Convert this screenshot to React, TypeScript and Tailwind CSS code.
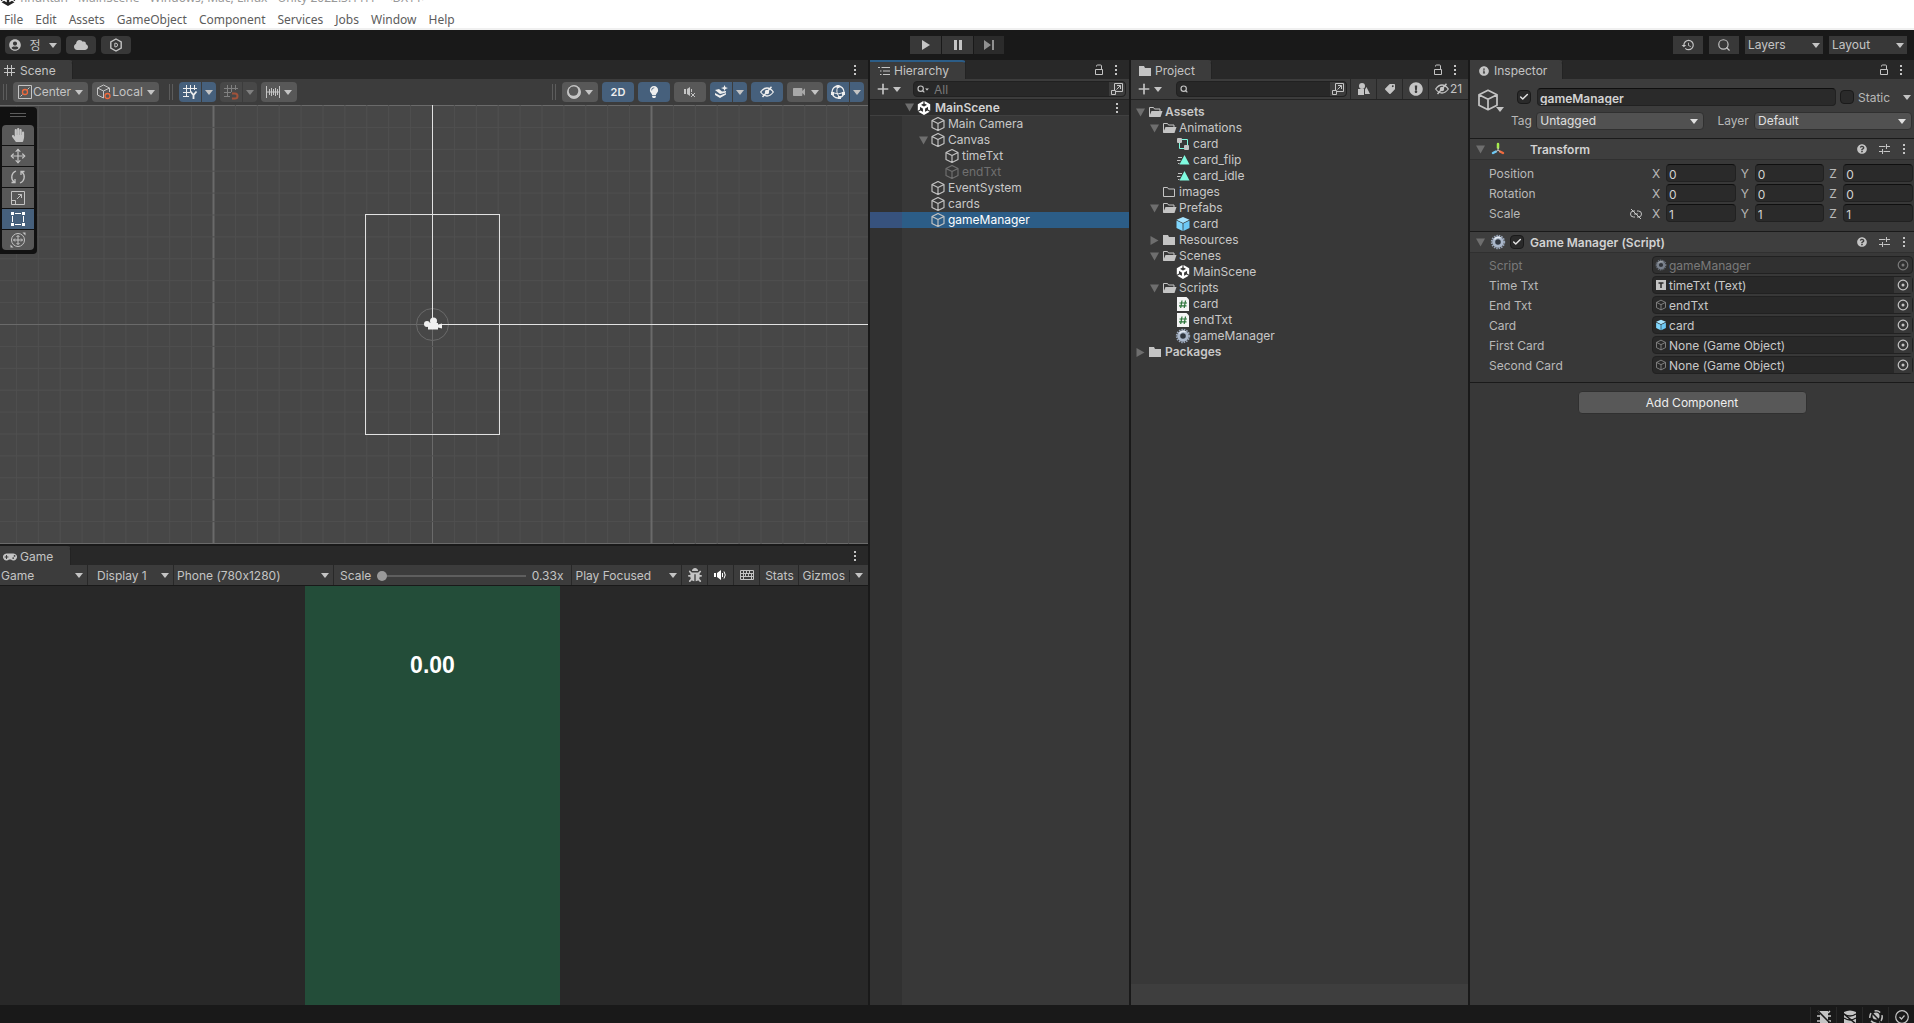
import { useState } from "react";
import type { ReactNode } from "react";
import clsx from "clsx";
import { FaCloud, FaUserCircle, FaHandPaper, FaLightbulb, FaGamepad, FaInfoCircle, FaTag, FaExclamationCircle, FaQuestionCircle, FaBug } from "react-icons/fa";
import { SiUnity } from "react-icons/si";
import { MdHistory, MdVideocam } from "react-icons/md";
import { Search, Plus, Check, Move } from "lucide-react";

type NodeKind =
    | "cube" | "prefab" | "unity" | "open" | "closed" | "empty"
    | "controller" | "clip" | "script" | "gear";

type TreeNode = {
    id: string;
    name: string;
    depth: number;
    icon: NodeKind;
    arrow?: "down" | "right";
    muted?: boolean;
    bold?: boolean;
};

const menus = ["File", "Edit", "Assets", "GameObject", "Component", "Services", "Jobs", "Window", "Help"];

const hierarchy: TreeNode[] = [
    { id: "camera", name: "Main Camera", depth: 1, icon: "cube" },
    { id: "canvas", name: "Canvas", depth: 1, icon: "cube", arrow: "down" },
    { id: "timeTxt", name: "timeTxt", depth: 2, icon: "cube" },
    { id: "endTxt", name: "endTxt", depth: 2, icon: "cube", muted: true },
    { id: "event", name: "EventSystem", depth: 1, icon: "cube" },
    { id: "cards", name: "cards", depth: 1, icon: "cube" },
    { id: "manager", name: "gameManager", depth: 1, icon: "cube" },
];

const assets: TreeNode[] = [
    { id: "assets", name: "Assets", depth: 0, icon: "open", arrow: "down", bold: true },
    { id: "animations", name: "Animations", depth: 1, icon: "open", arrow: "down" },
    { id: "anim-card", name: "card", depth: 2, icon: "controller" },
    { id: "anim-flip", name: "card_flip", depth: 2, icon: "clip" },
    { id: "anim-idle", name: "card_idle", depth: 2, icon: "clip" },
    { id: "images", name: "images", depth: 1, icon: "empty" },
    { id: "prefabs", name: "Prefabs", depth: 1, icon: "open", arrow: "down" },
    { id: "prefab-card", name: "card", depth: 2, icon: "prefab" },
    { id: "resources", name: "Resources", depth: 1, icon: "closed", arrow: "right" },
    { id: "scenes", name: "Scenes", depth: 1, icon: "open", arrow: "down" },
    { id: "main", name: "MainScene", depth: 2, icon: "unity" },
    { id: "scripts", name: "Scripts", depth: 1, icon: "open", arrow: "down" },
    { id: "script-card", name: "card", depth: 2, icon: "script" },
    { id: "script-end", name: "endTxt", depth: 2, icon: "script" },
    { id: "script-manager", name: "gameManager", depth: 2, icon: "gear" },
    { id: "packages", name: "Packages", depth: 0, icon: "closed", arrow: "right", bold: true },
];

const transform = [
    { label: "Position", values: ["0", "0", "0"] },
    { label: "Rotation", values: ["0", "0", "0"] },
    { label: "Scale", values: ["1", "1", "1"], linked: true },
];

const scriptFields = [
    { label: "Script", value: "gameManager", icon: "gear", muted: true },
    { label: "Time Txt", value: "timeTxt (Text)", icon: "text" },
    { label: "End Txt", value: "endTxt", icon: "cube" },
    { label: "Card", value: "card", icon: "prefab" },
    { label: "First Card", value: "None (Game Object)", icon: "cube" },
    { label: "Second Card", value: "None (Game Object)", icon: "cube" },
];

/* ---------- icons ---------- */

function Caret({ className = "" }: { className?: string }) {
    return (
        <svg viewBox="0 0 8 5" className={clsx("w-2 h-[5px] shrink-0 fill-current", className)}>
            <path d="M0 0h8L4 5z" />
        </svg>
    );
}

function Dots() {
    return (
        <svg viewBox="0 0 4 12" className="w-1 h-3 fill-[#c4c4c4]">
            <path d="M1 1h2v2H1zM1 5h2v2H1zM1 9h2v2H1z" />
        </svg>
    );
}

function LockOpen() {
    return (
        <svg viewBox="0 0 10 12" className="w-2.5 h-3 fill-none stroke-[#c4c4c4]">
            <path d="M1.5 5.5h7v5h-7zM2.5 2.5V2q0-1 1-1h3q1 0 1 1v3.500" />
        </svg>
    );
}

function HiddenEye() {
    return (
        <svg viewBox="0 0 14 12" className="w-3.5 h-3 shrink-0 fill-none stroke-current">
            <path d="M.7 6Q3.500 2 7 2t6.300 4Q10.500 10 7 10T.7 6z" strokeWidth="1.300" />
            <circle cx="7" cy="6" r="2.200" className="fill-current stroke-none" />
            <path d="M2.500 11 11.500.800" strokeWidth="1.500" />
        </svg>
    );
}

function Cube({ className = "size-4" }: { className?: string }) {
    return (
        <svg viewBox="0 0 16 16" className={clsx("fill-none stroke-current", className)} strokeWidth="1.150" strokeLinejoin="round">
            <path d="M8 1.500 14 4.500v7L8 14.500l-6-3v-7zM2 4.500l6 3 6-3M8 7.500v7" />
        </svg>
    );
}

function Prefab({ className = "size-4" }: { className?: string }) {
    return (
        <svg viewBox="0 0 16 16" className={className}>
            <path d="M8 1 14.500 3.800 8 7 1.500 3.800z" fill="#a5e4ff" />
            <path d="M1.500 4.600 7.600 7.600V15L1.500 12z" fill="#7fd6fd" />
            <path d="M14.500 4.600 8.400 7.600V15l6.100-3z" fill="#6cc8f5" />
        </svg>
    );
}

function Gear({ className = "size-4" }: { className?: string }) {
    return (
        <svg viewBox="0 0 16 16" className={className}>
            <circle cx="8" cy="8" r="6.300" fill="none" stroke="#98a5b8" strokeWidth="1.800" strokeDasharray="1.500 0.980" />
            <circle cx="8" cy="8" r="4.300" fill="#30363f" stroke="#a9b6c9" strokeWidth="3" />
            <path d="M4.500 5.500a4.300 4.300 0 0 1 6-1.500" fill="none" stroke="#e5ebf3" strokeWidth="1.500" />
        </svg>
    );
}

function PopOut() {
    return (
        <svg viewBox="0 0 12 12" className="size-3 fill-none stroke-[#c4c4c4]">
            <path d="M3.500 7V.5h8v8H5M.5 7.500h4v4h-4zM5.500 6.500l4-4M6 2.500h3.500V6" />
        </svg>
    );
}

function NodeIcon({ kind }: { kind: NodeKind }) {
    switch (kind) {
        case "cube":
            return <Cube />;
        case "prefab":
            return <Prefab />;
        case "gear":
            return <Gear />;
        case "unity":
            return <SiUnity className="size-3.5 text-white" />;
        case "open":
            return (
                <svg viewBox="0 0 16 16" className="size-4">
                    <path d="M2.500 12.500v-9h4l1 1.500h5.500v2" fill="none" stroke="#c4c4c4" />
                    <path d="M4.500 7H15.500l-2 6H2z" fill="#c4c4c4" />
                </svg>
            );
        case "closed":
            return (
                <svg viewBox="0 0 16 16" className="size-4">
                    <path d="M2 3h5l1 2h6v8H2z" fill="#c4c4c4" />
                </svg>
            );
        case "empty":
            return (
                <svg viewBox="0 0 16 16" className="size-4">
                    <path d="M2.500 3.500h4l1 1.500h6v7.500h-11z" fill="none" stroke="#c4c4c4" />
                </svg>
            );
        case "controller":
            return (
                <svg viewBox="0 0 16 16" className="size-4">
                    <path d="M7 3.500h5.500V9M4.500 6v6.500H9" fill="none" stroke="#7ffbe0" />
                    <rect x="2" y="2" width="5" height="5" rx="1" fill="#c4c4c4" />
                    <rect x="9" y="9" width="5" height="5" rx="1" fill="#c4c4c4" />
                </svg>
            );
        case "clip":
            return (
                <svg viewBox="0 0 16 16" className="size-4">
                    <path d="M9.500 3 14.500 12.500H4.500z" fill="#7ffbe0" />
                    <path d="M3 5.500h4M2 8.500h3.500M3 11.500h1.500" stroke="#c4c4c4" />
                </svg>
            );
        case "script":
            return (
                <svg viewBox="0 0 16 16" className="size-4">
                    <path d="M2 1h9.500L14 3.500V15H2z" fill="#f4f4f4" />
                    <path d="M7 4.500 5.700 12M10.500 4.500 9.200 12M4.500 7h7.500M4 9.800h7.500" stroke="#2a7338" strokeWidth="1.200" />
                </svg>
            );
    }
}

/* ---------- shared pieces ---------- */

function Tab({ icon, title, active, lock = true, className }: { icon: ReactNode; title: string; active?: boolean; lock?: boolean; className: string }) {
    return (
        <div className="flex items-center justify-between h-[19px] bg-[#282828]">
            <button
                type="button"
                className={clsx(
                    "flex items-center h-full rounded-tr-sm bg-[#3c3c3c] text-[#c4c4c4] border-t-2 border-r border-r-[#232323]",
                    active ? "border-t-[#2c5d87]" : "border-t-[#3c3c3c]",
                    className
                )}
            >
                {icon}
                {title}
            </button>
            <div className="flex items-center gap-2.5 pr-[11px]">
                {lock && <button type="button" aria-label={`Lock ${title}`}><LockOpen /></button>}
                <button type="button" aria-label={`${title} menu`}><Dots /></button>
            </div>
        </div>
    );
}

function Picker({ label, value, className, selectClass = "", caretClass = "right-2" }: { label: string; value: string; className: string; selectClass?: string; caretClass?: string }) {
    return (
        <div className={clsx("relative flex items-center shrink-0", className)}>
            <select aria-label={label} className={clsx("appearance-none w-full h-full outline-none", selectClass)}>
                <option>{value}</option>
            </select>
            <Caret className={clsx("absolute pointer-events-none", caretClass)} />
        </div>
    );
}

function ToolButton({ label, on, dim, className, children }: { label: string; on?: boolean; dim?: boolean; className: string; children?: ReactNode }) {
    return (
        <button
            type="button"
            aria-label={label}
            className={clsx(
                "flex items-center justify-center h-5 shrink-0",
                on ? "bg-[#46607c] text-[#eeeeee]" : dim ? "bg-[#484848] text-[#808080]" : "bg-[#585858] text-[#c4c4c4]",
                className
            )}
        >
            {children}
        </button>
    );
}

function Handle() {
    return <div className="w-1 h-4 shrink-0 border-x border-[#5c5c5c]" />;
}

function TreeRow({ node, selected, onSelect }: { node: TreeNode; selected?: boolean; onSelect: () => void }) {
    return (
        <button
            type="button"
            onClick={onSelect}
            style={{ paddingLeft: node.depth * 14 }}
            className={clsx(
                "flex items-center w-full h-4 text-left leading-4",
                selected ? "bg-[#2c5d87] text-white" : node.muted ? "text-[#707070]" : "text-[#c8c8c8]",
                node.bold && "font-semibold"
            )}
        >
            <span className="flex justify-center w-3.5 shrink-0 text-[#6e6e6e]">
                {node.arrow && (
                    <svg viewBox="0 0 9 9" className={clsx("size-[9px] fill-current", node.arrow === "right" && "-rotate-90")}>
                        <path d="M0 .5h9L4.500 8.500z" />
                    </svg>
                )}
            </span>
            <span className={clsx("flex items-center justify-center w-4 mr-0.5 shrink-0", !node.muted && "text-[#c4c4c4]")}>
                <NodeIcon kind={node.icon} />
            </span>
            {node.name}
        </button>
    );
}

/* ---------- top bars ---------- */

function TitleBar() {
    return (
        <header className="bg-white font-['Noto_Sans',sans-serif] text-xs border-b-2 border-[#f0f0f0]">
            <div className="flex items-end h-3 overflow-hidden text-[#999999]">
                <div className="flex items-center gap-1 h-6 pb-1">
                    <SiUnity className="size-4 text-[#222222]" />
                    <span className="leading-4">findRtan - MainScene - Windows, Mac, Linux - Unity 2022.3.11f1* &lt;DX11&gt;</span>
                </div>
            </div>
            <nav className="flex gap-3 h-4 px-1 text-[#5c5c5c] leading-4">
                {menus.map(m => <button key={m} type="button">{m}</button>)}
            </nav>
        </header>
    );
}

function MainToolbar() {
    const item = "flex items-center justify-center h-[18px] bg-[#383838] text-[#c4c4c4]";

    return (
        <div className="grid grid-cols-[1fr_auto_1fr] items-center h-[30px] bg-[#191919] text-[#c4c4c4]">
            <div className="flex items-center gap-[5px] pl-[5px]">
                <button type="button" className={clsx(item, "w-14 gap-2 rounded-sm")}>
                    <FaUserCircle className="size-3" />
                    <span className="font-['Noto_Sans_CJK_KR',sans-serif] leading-4">정</span>
                    <Caret />
                </button>
                <button type="button" aria-label="Cloud" className={clsx(item, "w-[30px] rounded-sm")}><FaCloud className="size-3.5" /></button>
                <button type="button" aria-label="DevOps" className={clsx(item, "w-[30px] rounded-sm")}>
                    <svg viewBox="0 0 14 14" className="size-3.5 fill-none stroke-current">
                        <path d="M7 1 12.200 4v6L7 13 1.800 10V4z" strokeWidth="1.400" />
                        <path d="M5.800 5.200H7q1.500 0 1.500 1.800T7 8.800H5.800z" />
                    </svg>
                </button>
            </div>
            <div className="flex gap-px">
                <button type="button" aria-label="Play" className={clsx(item, "w-[31px]")}>
                    <svg viewBox="0 0 10 10" className="size-2.5 fill-current"><path d="M1 0l8 5-8 5z" /></svg>
                </button>
                <button type="button" aria-label="Pause" className={clsx(item, "w-[31px]")}>
                    <svg viewBox="0 0 10 10" className="size-2.5 fill-current"><path d="M1 0h3v10H1zM6 0h3v10H6z" /></svg>
                </button>
                <button type="button" aria-label="Step" className="flex items-center justify-center w-[30px] h-[18px] bg-[#2b2b2b] text-[#909090]">
                    <svg viewBox="0 0 11 10" className="w-[11px] h-2.5 fill-current"><path d="M0 0l7 5-7 5zM8 0h2v10H8z" /></svg>
                </button>
            </div>
            <div className="flex items-center justify-end gap-1.5 pr-[7px]">
                <button type="button" aria-label="Undo history" className={clsx(item, "w-[30px]")}><MdHistory className="size-3.5" /></button>
                <button type="button" aria-label="Search" className={clsx(item, "w-[30px]")}><Search className="size-3.5" /></button>
                <Picker label="Layers" value="Layers" className="w-[78px] h-[18px] bg-[#383838]" selectClass="pl-[3px]" caretClass="right-[3px]" />
                <Picker label="Layout" value="Layout" className="w-[78px] h-[18px] bg-[#383838]" selectClass="pl-[3px]" caretClass="right-[3px]" />
            </div>
        </div>
    );
}

/* ---------- scene ---------- */

function GridIcon({ children }: { children?: ReactNode }) {
    return (
        <svg viewBox="0 0 16 16" className="size-4 fill-none stroke-current">
            <path d="M4.500 1v12M8.500 1v7M12.500 1v5M1 4.500h14M1 8.500h7M1 12.500h6" />
            {children}
        </svg>
    );
}

function SceneToolbar() {
    return (
        <div className="flex items-center justify-between h-[26px] pl-[3px] pr-1 bg-[#3c3c3c]">
            <div className="flex items-center gap-1">
                <Handle />
                <ToolButton label="Pivot" className="ml-0.5 w-[75px] gap-1 rounded-sm">
                    <span className="flex items-center gap-px">
                        <svg viewBox="0 0 14 14" className="size-3.5 fill-none stroke-current">
                            <path d="M.5.5h13v13H.5zM2.500 11.500l2-2M9.500 4.500l2-2" />
                            <circle cx="7" cy="7" r="2.500" stroke="#f0693c" strokeWidth="1.300" />
                        </svg>
                        Center
                    </span>
                    <Caret />
                </ToolButton>
                <ToolButton label="Orientation" className="w-[67px] gap-1 rounded-sm">
                    <span className="flex items-center">
                        <svg viewBox="0 0 16 16" className="size-4 fill-none stroke-current">
                            <path d="M13.500 8V4L7.500 1l-6 3v7l6 3M1.500 4l6 3 6-3M7.500 7v7" />
                            <circle cx="11.500" cy="12" r="2.500" stroke="#f0693c" strokeWidth="1.300" />
                        </svg>
                        Local
                    </span>
                    <Caret />
                </ToolButton>
                <span className="ml-1.5 mr-0.5"><Handle /></span>
                <div className="flex gap-px">
                    <ToolButton label="Grid axis" on className="w-[22px] rounded-l-sm">
                        <GridIcon><path d="M8.500 7.500 11.500 11l3-3.500M11.500 11v4" strokeWidth="1.800" /></GridIcon>
                    </ToolButton>
                    <ToolButton label="Grid options" on className="w-3.5 rounded-r-sm"><Caret className="text-[#c4c4c4]" /></ToolButton>
                </div>
                <div className="flex gap-px">
                    <ToolButton label="Snapping" dim className="w-[22px] rounded-l-sm">
                        <GridIcon><path d="M9 9.500h3a2.300 2.300 0 0 1 0 5H9" stroke="#a1523a" strokeWidth="2" /></GridIcon>
                    </ToolButton>
                    <ToolButton label="Snapping options" dim className="w-3.5 rounded-r-sm"><Caret /></ToolButton>
                </div>
                <ToolButton label="Snap increment" className="w-9 gap-1 rounded-sm">
                    <svg viewBox="0 0 14 12" className="w-3.5 h-3 fill-none stroke-current">
                        <path d="M.5 0v12M13.500 0v12M3.500 3v6M5.500 2v8M7.500 3v6M9.500 2v8M11.500 3v6M1 6h12" />
                    </svg>
                    <Caret />
                </ToolButton>
            </div>
            <div className="flex items-center gap-1">
                <Handle />
                <ToolButton label="Draw mode" className="ml-0.5 w-9 gap-1 rounded-sm">
                    <svg viewBox="0 0 14 14" className="size-3.5">
                        <circle cx="7" cy="7" r="6.800" fill="#c4c4c4" />
                        <circle cx="6.500" cy="6" r="4.800" fill="#585858" />
                        <circle cx="7" cy="7" r="6.300" fill="none" stroke="#c4c4c4" />
                    </svg>
                    <Caret />
                </ToolButton>
                <ToolButton label="2D view" on className="w-8 rounded-sm font-semibold text-[11px]">2D</ToolButton>
                <ToolButton label="Scene lighting" on className="w-8 rounded-sm"><FaLightbulb className="size-3" /></ToolButton>
                <ToolButton label="Scene audio" className="w-8 rounded-sm">
                    <svg viewBox="0 0 12 12" className="size-3 fill-current">
                        <path d="M0 3h2v5H0zM3 3l3-2v9L3 8z" />
                        <path d="M7.500 3v3M7 7l4 4M11 7l-4 4" className="stroke-current" />
                    </svg>
                </ToolButton>
                <div className="flex gap-px">
                    <ToolButton label="Scene effects" on className="w-[22px] rounded-l-sm">
                        <svg viewBox="0 0 14 14" className="size-3.5 fill-current">
                            <path d="M1 5l4-1 3 2.500 4-.5v1.500L6 9zM1 8l5 2.500 6-2.500v1.500L6 13 1 10z" />
                            <path d="M10.500 0l1 2.200L14 3l-2.500 1-1 2-.9-2L7 3l2.600-.8z" />
                        </svg>
                    </ToolButton>
                    <ToolButton label="Effects options" on className="w-3.5 rounded-r-sm"><Caret className="text-[#c4c4c4]" /></ToolButton>
                </div>
                <ToolButton label="Scene visibility" on className="w-8 rounded-sm"><HiddenEye /></ToolButton>
                <ToolButton label="Scene camera" className="w-9 gap-1 rounded-sm"><MdVideocam className="size-4 text-[#a8a8a8]" /><Caret /></ToolButton>
                <div className="flex gap-px">
                    <ToolButton label="Gizmos" on className="w-[22px] rounded-l-sm">
                        <svg viewBox="0 0 14 14" className="size-3.5 fill-none stroke-current">
                            <circle cx="7" cy="7" r="6" strokeWidth="1.300" />
                            <path d="M7 1.500Q4 7 8.500 12.300M1.500 7.500q5.500 3 11 0" />
                            <path d="M5.500 0h3v3h-3zM0 7h3v3H0zM11 7h3v3h-3zM7 11h3v3H7z" className="fill-current stroke-none" />
                        </svg>
                    </ToolButton>
                    <ToolButton label="Gizmos options" on className="w-3.5 rounded-r-sm"><Caret className="text-[#c4c4c4]" /></ToolButton>
                </div>
            </div>
        </div>
    );
}

const toolIcons: { label: string; icon: ReactNode }[] = [
    { label: "View", icon: <FaHandPaper className="size-3.5" /> },
    { label: "Move", icon: <Move className="size-4" strokeWidth={1.800} /> },
    {
        label: "Rotate",
        icon: (
            <svg viewBox="0 0 16 16" className="size-4 fill-none stroke-current" strokeWidth="1.300">
                <path d="M6 2A6.500 6.500 0 0 0 4 13M10 14a6.500 6.500 0 0 0 2-11M1.500 13.500H5V10M14.500 2.500H11V6" />
            </svg>
        ),
    },
    {
        label: "Scale",
        icon: (
            <svg viewBox="0 0 16 16" className="size-4 fill-none stroke-current">
                <path d="M1.500 1.500h13v13h-13zM1.500 10.500h4v4M7 9l4.500-4.500M8 4.500h3.500V8" />
            </svg>
        ),
    },
    {
        label: "Rect",
        icon: (
            <svg viewBox="0 0 16 16" className="size-4 fill-none stroke-current">
                <path d="M5 2.500h6M5 13.500h6M2.500 5v6M13.500 5v6" />
                <path d="M1 1h3v3H1zM12 1h3v3h-3zM1 12h3v3H1zM12 12h3v3h-3z" className="fill-current stroke-none" />
            </svg>
        ),
    },
    {
        label: "Transform",
        icon: (
            <svg viewBox="0 0 16 16" className="size-4 fill-none stroke-current">
                <circle cx="8" cy="8" r="6.500" />
                <path d="M8 3.500v9M3.500 8h9M6.500 5 8 3.500 9.500 5M6.500 11 8 12.500 9.500 11M5 6.500 3.500 8 5 9.500M11 6.500 12.500 8 11 9.500" />
                <path d="M12.500.5h3v3zM.5 12.500v3h3z" className="fill-current stroke-none" />
            </svg>
        ),
    },
];

function SceneView() {
    const [tool, setTool] = useState("Rect");
    const step = 21.9;
    const lines = Array.from({ length: 60 }, (_, i) => i - 30);

    return (
        <div className="relative flex-1 min-h-0 bg-[#474747] overflow-hidden">
            <svg viewBox="0 0 868 439" preserveAspectRatio="xMidYMid slice" className="absolute inset-0 w-full h-full">
                {lines.map(i => (
                    <g key={i} stroke={i % 10 === 0 ? "#6a6a6a" : "#505050"}>
                        <path d={`M${432.5 + i * step} -200V700`} strokeWidth={i % 10 === 0 && i !== 0 ? 2 : 1} />
                        <path d={`M-200 ${219.5 + i * step}H1100`} strokeWidth="1" />
                    </g>
                ))}
                <path d="M432.500 219V-200M432 219.500H1100" stroke="#e2e2e2" />
                <rect x="365.500" y="109.500" width="134" height="220" fill="none" stroke="#e2e2e2" />
                <circle cx="432.500" cy="219.500" r="16" fill="#474747" stroke="#6a6a6a" />
                <path d="M416.500 219.500h16v16" fill="none" stroke="#6a6a6a" />
                <path d="M432.500 203v14M440 219.500h9" stroke="#e2e2e2" />
                <g fill="#f0f0f0">
                    <circle cx="427" cy="219" r="3" />
                    <circle cx="433.500" cy="216" r="3.500" />
                    <path d="M428 218h10v1.500l4-1v5l-4-1v2h-10z" />
                </g>
            </svg>
            <div className="absolute left-0 top-0.5 w-[37px] pl-0.5 pb-1 rounded-r bg-[#111111]">
                <div className="w-4 h-1 mt-1.5 mb-2 ml-2 border-y border-[#5c5c5c]" />
                <div className="flex flex-col gap-px w-8">
                    {toolIcons.map(t => (
                        <button
                            key={t.label}
                            type="button"
                            aria-label={t.label}
                            onClick={() => setTool(t.label)}
                            className={clsx(
                                "flex items-center justify-center h-5 first:rounded-t-sm last:rounded-b-sm",
                                tool === t.label ? "bg-[#46607c] text-white" : "bg-[#585858] text-[#c4c4c4]"
                            )}
                        >
                            {t.icon}
                        </button>
                    ))}
                </div>
            </div>
        </div>
    );
}

/* ---------- game ---------- */

function GameToolbar() {
    const cell = "flex items-center justify-center shrink-0 h-full border-r border-[#282828]";

    return (
        <div className="flex items-center h-[21px] bg-[#3c3c3c] border-b border-[#191919] text-[#c4c4c4]">
            <Picker label="View" value="Game" className="w-[88px] h-full border-r border-[#282828]" selectClass="pl-px pt-px" caretClass="right-1" />
            <Picker label="Display" value="Display 1" className="w-[86px] h-full border-r border-[#282828]" selectClass="pl-[9px] pt-px" caretClass="right-1" />
            <Picker label="Resolution" value="Phone (780x1280)" className="w-40 h-full border-r border-[#282828]" selectClass="pl-[3px] pt-px" caretClass="right-1" />
            <div className="flex flex-1 items-center gap-1.5 h-full pl-1.5 pr-2 pt-px border-r border-[#282828]">
                <label htmlFor="game-scale">Scale</label>
                <input
                    id="game-scale"
                    type="range"
                    min={33}
                    max={500}
                    defaultValue={33}
                    className="flex-1 min-w-0 h-3 appearance-none bg-transparent [&::-webkit-slider-runnable-track]:h-0.5 [&::-webkit-slider-runnable-track]:bg-[#5e5e5e] [&::-webkit-slider-thumb]:appearance-none [&::-webkit-slider-thumb]:size-2.5 [&::-webkit-slider-thumb]:-mt-1 [&::-webkit-slider-thumb]:rounded-full [&::-webkit-slider-thumb]:bg-[#999999]"
                />
                <span>0.33x</span>
            </div>
            <Picker label="Play mode" value="Play Focused" className="w-[110px] h-full border-r border-[#282828]" selectClass="pl-[3px] pt-px" caretClass="right-1" />
            <button type="button" aria-label="Debug" className={clsx(cell, "w-[26px]")}><FaBug className="size-3.5" /></button>
            <button type="button" aria-label="Mute" className={clsx(cell, "w-[26px]")}>
                <svg viewBox="0 0 13 10" className="w-[13px] h-2.5 fill-white">
                    <path d="M0 3h2v4H0zM3 3l4-3v10L3 7z" />
                    <path d="M8.500 3v4M10 1.500q2.500 3.500 0 7" fill="none" stroke="white" />
                </svg>
            </button>
            <button type="button" aria-label="Shortcuts" className={clsx(cell, "w-[26px]")}>
                <svg viewBox="0 0 14 10" className="w-3.5 h-2.5 fill-none stroke-current">
                    <path d="M.5.5h13v9H.5zM1 3.500h12M1 6.500h12M3.500 1v5M6.500 1v2.500M9.500 1v2.500M5.500 4v2.500M8.500 4v2.500M11.500 4v5M3.500 7v2.500" />
                </svg>
            </button>
            <button type="button" className={clsx(cell, "w-[39px] pt-px")}>Stats</button>
            <div className="flex items-center shrink-0 h-full pl-[3px] pt-px">
                <button type="button" className="pr-1 border-r border-[#282828] leading-3">Gizmos</button>
                <button type="button" aria-label="Gizmos options" className="px-[5px]"><Caret /></button>
            </div>
        </div>
    );
}

/* ---------- hierarchy & project ---------- */

function SearchBox({ label, placeholder, caret }: { label: string; placeholder?: string; caret?: boolean }) {
    return (
        <div className="flex flex-1 min-w-0 items-center h-4 rounded border border-[#212121] bg-[#282828]">
            <span className="flex items-center pl-[3px] pr-[3px] text-[#c4c4c4]">
                <Search className="size-2" strokeWidth={3.500} />
                {caret && <Caret className="scale-50 -ml-0.5" />}
            </span>
            <input aria-label={label} placeholder={placeholder} className="flex-1 min-w-0 h-full bg-transparent outline-none placeholder:text-[#7a7a7a]" />
            <button type="button" aria-label={`Open ${label}`} className="flex items-center h-full px-0.5 rounded-r bg-[#3c3c3c]"><PopOut /></button>
        </div>
    );
}

function AddButton({ label }: { label: string }) {
    return (
        <button type="button" aria-label={label} className="flex items-center shrink-0 gap-0.5 text-[#c4c4c4]">
            <Plus className="size-4" strokeWidth={2.500} />
            <Caret />
        </button>
    );
}

function Hierarchy() {
    const [selected, setSelected] = useState("manager");

    return (
        <section className="flex flex-col min-h-0 min-w-0 bg-[#383838]">
            <Tab
                title="Hierarchy"
                active
                className="w-24 pl-2 gap-1"
                icon={
                    <svg viewBox="0 0 12 10" className="w-3 h-2.5 fill-none stroke-current">
                        <path d="M0 1.500h2M3.500 1.500H12M2 5h1.500M5 5h7M2 8.500h1.500M5 8.500h7" />
                    </svg>
                }
            />
            <div className="flex items-center h-[21px] pl-[5px] pr-[3px] gap-3 bg-[#3c3c3c] border-b border-[#232323]">
                <AddButton label="Create object" />
                <SearchBox label="Hierarchy search" placeholder="All" caret />
            </div>
            <div className="flex items-center justify-between h-4 pl-8 pr-2.5 bg-[#2d2d2d] border-b border-[#404040]">
                <div className="flex items-center gap-[3px] font-semibold text-[#d2d2d2]">
                    <span className="flex justify-center w-3.5 -mr-[3px] text-[#6e6e6e]">
                        <svg viewBox="0 0 9 9" className="size-[9px] fill-current"><path d="M0 .5h9L4.500 8.500z" /></svg>
                    </span>
                    <span className="flex justify-center w-4"><SiUnity className="size-3.5 text-white" /></span>
                    MainScene
                </div>
                <button type="button" aria-label="Scene menu"><Dots /></button>
            </div>
            <div className="flex flex-1 min-h-0">
                <div className="w-8 shrink-0 bg-[#313131]">
                    {hierarchy.map(n => <div key={n.id} className={clsx("h-4", selected === n.id && "bg-[#37527d]")} />)}
                </div>
                <div className="flex-1">
                    {hierarchy.map(n => <TreeRow key={n.id} node={n} selected={selected === n.id} onSelect={() => setSelected(n.id)} />)}
                </div>
            </div>
        </section>
    );
}

function Project() {
    const [selected, setSelected] = useState("");
    const cell = "flex items-center justify-center shrink-0 h-full border-l border-[#282828] text-[#c4c4c4]";

    return (
        <section className="flex flex-col min-h-0 min-w-0 bg-[#383838]">
            <Tab
                title="Project"
                className="w-[81px] pl-2 gap-1"
                icon={<svg viewBox="0 0 12 10" className="w-3 h-2.5 fill-current"><path d="M0 0h5l1 2h6v8H0z" /></svg>}
            />
            <div className="flex items-center h-[21px] pl-[5px] bg-[#3c3c3c] border-b border-[#232323]">
                <AddButton label="Create asset" />
                <div className="flex flex-1 min-w-0 pl-3.5 pr-[3px]"><SearchBox label="Project search" /></div>
                <button type="button" aria-label="Filter by type" className={clsx(cell, "w-[26px]")}>
                    <svg viewBox="0 0 12 12" className="size-3 fill-current">
                        <circle cx="4" cy="3" r="3" />
                        <path d="M0 6h6v6H0zM8.500 4l3.500 7H7V6.500z" />
                    </svg>
                </button>
                <button type="button" aria-label="Filter by label" className={clsx(cell, "w-[26px]")}><FaTag className="size-2.5 rotate-90" /></button>
                <button type="button" aria-label="Import log" className={clsx(cell, "w-[26px]")}><FaExclamationCircle className="size-3.5" /></button>
                <button type="button" aria-label="Hidden packages" className={clsx(cell, "w-10 gap-px")}><HiddenEye />21</button>
            </div>
            <div className="flex-1 min-h-0 pt-1 pl-0.5">
                {assets.map(n => <TreeRow key={n.id} node={n} selected={selected === n.id} onSelect={() => setSelected(n.id)} />)}
            </div>
            <div className="h-[21px] bg-[#3e3e3e]" />
        </section>
    );
}

/* ---------- inspector ---------- */

function CheckBox({ id, label, checked }: { id: string; label: string; checked?: boolean }) {
    return (
        <span className="relative flex size-3.5 shrink-0">
            <input id={id} type="checkbox" aria-label={label} defaultChecked={checked} className="peer appearance-none size-3.5 rounded-sm border border-[#1a1a1a] bg-[#2a2a2a]" />
            <Check className="absolute inset-0.5 size-2.5 text-[#e4e4e4] opacity-0 peer-checked:opacity-100 pointer-events-none" strokeWidth={3.500} />
        </span>
    );
}

function ComponentHeader({ icon, title, toggle }: { icon: ReactNode; title: string; toggle?: boolean }) {
    return (
        <div className="flex items-center h-[22px] pl-1 pr-2 border-t border-t-[#1a1a1a] border-b border-b-[#303030] bg-[#3e3e3e]">
            <span className="flex justify-center w-3 text-[#6e6e6e]">
                <svg viewBox="0 0 9 9" className="size-[9px] fill-current"><path d="M0 .5h9L4.500 8.500z" /></svg>
            </span>
            <span className="flex justify-center w-6">{icon}</span>
            <span className="w-5">{toggle && <CheckBox id="manager-enabled" label="Enable Game Manager" checked />}</span>
            <h2 className="flex-1 pt-0.5 font-semibold text-[#d2d2d2]">{title}</h2>
            <div className="flex items-center gap-3 text-[#c4c4c4]">
                <button type="button" aria-label={`${title} help`}><FaQuestionCircle className="size-2.5" /></button>
                <button type="button" aria-label={`${title} presets`}>
                    <svg viewBox="0 0 11 10" className="w-[11px] h-2.5 fill-none stroke-current">
                        <path d="M0 2.500h6.500M8 2.500h3M7.500 0v5M0 7.500h3M4.500 7.500H11M3.500 5v5" />
                    </svg>
                </button>
                <button type="button" aria-label={`${title} menu`}><Dots /></button>
            </div>
        </div>
    );
}

function FieldIcon({ kind, muted }: { kind: string; muted?: boolean }) {
    if (kind === "gear") return <Gear className={clsx("size-3", muted && "opacity-60")} />;
    if (kind === "prefab") return <Prefab className="size-3" />;
    if (kind === "cube") return <Cube className="size-3 text-[#8a8a8a]" />;
    return (
        <svg viewBox="0 0 12 12" className="size-3">
            <path d="M1 1h10v10H1z" fill="#c4c4c4" />
            <path d="M3.500 4h5M6 4v5" stroke="#282828" strokeWidth="1.500" />
        </svg>
    );
}

function Inspector() {
    const box = "h-[18px] pt-0.5 rounded-sm border border-[#212121] border-t-[#0f0f0f] bg-[#2a2a2a] text-[#d2d2d2] outline-none";

    return (
        <section className="flex flex-col min-h-0 min-w-0 bg-[#383838] text-[#b8b8b8]">
            <Tab title="Inspector" className="w-[93px] pl-[9px] gap-[5px]" icon={<FaInfoCircle className="size-2.5" />} />

            {/* Object header */}
            <div className="flex h-[59px] pt-[9px] pl-1.5 bg-[#3c3c3c]">
                <button type="button" aria-label="Object icon" className="flex items-end w-[33px] h-[18px] mt-1.5 mr-2 text-[#c4c4c4]">
                    <Cube className="size-6 shrink-0" />
                    <Caret className="-ml-1" />
                </button>
                <div className="flex flex-col flex-1 gap-1.5">
                    <div className="flex items-center pr-[3px]">
                        <CheckBox id="object-active" label="Active" checked />
                        <input aria-label="Object name" defaultValue="gameManager" className={clsx(box, "flex-1 min-w-0 ml-1.5 mr-1 px-0.5 font-semibold")} />
                        <CheckBox id="object-static" label="Static" />
                        <label htmlFor="object-static" className="w-[45px] pt-0.5 ml-1">Static</label>
                        <Caret className="text-[#c4c4c4]" />
                    </div>
                    <div className="flex items-center justify-between pr-0.5">
                        <span className="w-5 -ml-1.5">Tag</span>
                        <Picker label="Tag" value="Untagged" className="w-[168px] h-[18px] text-[#e0e0e0]" selectClass="pl-[3px] rounded-sm border border-[#303030] bg-[#515151]" caretClass="right-1.5" />
                        <span className="ml-2">Layer</span>
                        <Picker label="Layer" value="Default" className="w-[158px] h-[18px] text-[#e0e0e0]" selectClass="pl-[3px] rounded-sm border border-[#303030] bg-[#515151]" caretClass="right-1.5" />
                    </div>
                </div>
            </div>

            <ComponentHeader
                title="Transform"
                icon={
                    <svg viewBox="0 0 14 14" className="size-3.5" strokeWidth="2.500" strokeLinecap="round">
                        <path d="M7 2v4" stroke="#a6ee4c" />
                        <path d="M5 9.500l-3 1.500" stroke="#6cc8f5" />
                        <path d="M9 9.500l3 1.500" stroke="#f0693c" />
                        <path d="M7 6v2L5 9.500M7 8l2 1.500" stroke="#c4c4c4" strokeWidth="1" />
                    </svg>
                }
            />
            <div className="flex flex-col gap-0.5 pt-1 pb-[9px] pl-[19px] pr-px">
                {transform.map(row => (
                    <div key={row.label} className="flex items-center h-[18px]">
                        <span className="flex items-center justify-between w-[163px] pt-0.5 pr-2.5 shrink-0">
                            {row.label}
                            {row.linked && (
                                <svg viewBox="0 0 12 10" className="w-3 h-2.5 fill-none stroke-[#c4c4c4]">
                                    <path d="M5 2H3.500a3 3 0 0 0 0 6H5M7 2h1.500a3 3 0 0 1 0 6H7M4 5h4M1 0l10 10" />
                                </svg>
                            )}
                        </span>
                        <div className="flex flex-1 gap-[5px]">
                            {["X", "Y", "Z"].map((axis, i) => (
                                <label key={axis} className="flex flex-1 items-center">
                                    <span className="w-3.5 pt-0.5">{axis}</span>
                                    <input defaultValue={row.values[i]} aria-label={`${row.label} ${axis}`} className={clsx(box, "flex-1 w-0 min-w-0 px-0.5")} />
                                </label>
                            ))}
                        </div>
                    </div>
                ))}
            </div>

            <ComponentHeader title="Game Manager (Script)" toggle icon={<Gear />} />
            <div className="flex flex-col gap-0.5 pt-[3px] pb-2 pl-[19px] pr-px border-b border-[#1a1a1a]">
                {scriptFields.map(f => (
                    <div key={f.label} className={clsx("flex items-center h-[18px]", f.muted && "text-[#7a7a7a]")}>
                        <span className="w-[163px] pt-0.5 shrink-0">{f.label}</span>
                        <div className={clsx("flex flex-1 items-center h-full pl-0.5 rounded-sm border border-[#212121]", f.muted ? "bg-[#303030]" : "bg-[#282828] text-[#c8c8c8]")}>
                            <FieldIcon kind={f.icon} muted={f.muted} />
                            <span className="flex-1 pl-0.5 pt-0.5">{f.value}</span>
                            <button type="button" aria-label={`Select ${f.label}`} className={clsx("flex items-center justify-center w-[18px] h-full", f.muted ? "text-[#7a7a7a]" : "bg-[#373737] text-[#c4c4c4]")}>
                                <svg viewBox="0 0 12 12" className="size-3 fill-none stroke-current">
                                    <circle cx="6" cy="6" r="4.800" strokeWidth="1.200" />
                                    <circle cx="6" cy="6" r="1.500" className="fill-current stroke-none" />
                                </svg>
                            </button>
                        </div>
                    </div>
                ))}
            </div>
            <button type="button" className="self-center w-[229px] h-[23px] mt-2 rounded-sm border border-[#303030] bg-[#585858] text-[#eeeeee]">
                Add Component
            </button>
        </section>
    );
}

/* ---------- status bar ---------- */

function StatusBar() {
    const cell = "flex justify-center w-[26px] h-4 border-l border-[#282828]";

    return (
        <footer className="flex justify-end h-[18px] pt-0.5 overflow-hidden bg-[#191919] text-[#c4c4c4]">
            <button type="button" aria-label="Debugger" className={cell}>
                <svg viewBox="0 0 14 14" className="size-3.5 mt-[3px] shrink-0">
                    <path d="M3 1h8v12H3z" fill="currentColor" />
                    <path d="M1 1l2 2M13 1l-2 2M0 6h3M11 6h3M0 11h3M11 11h3" stroke="currentColor" strokeWidth="1.500" />
                    <path d="M1 1l12 12" stroke="#191919" strokeWidth="1.500" />
                </svg>
            </button>
            <button type="button" aria-label="Cache server" className={cell}>
                <svg viewBox="0 0 14 14" className="size-3.5 mt-[3px] shrink-0">
                    <path d="M1 2q6-3 12 0v12H1z" fill="currentColor" />
                    <path d="M1 4q6 4 12 0M1 8q6 4 12 0M1 4l12 10" stroke="#191919" strokeWidth="1.500" fill="none" />
                </svg>
            </button>
            <button type="button" aria-label="Auto lighting" className={cell}>
                <svg viewBox="0 0 14 14" className="size-3.5 mt-[3px] shrink-0">
                    <circle cx="7" cy="6" r="3.500" fill="currentColor" />
                    <circle cx="7" cy="7" r="6.200" fill="none" stroke="currentColor" strokeWidth="1.500" strokeDasharray="6 3" />
                    <path d="M1 1l12 12" stroke="#191919" strokeWidth="1.500" />
                </svg>
            </button>
            <button type="button" aria-label="Activity" className={clsx(cell, "w-6")}>
                <svg viewBox="0 0 14 14" className="size-3.5 mt-[3px] shrink-0 fill-none stroke-current" strokeWidth="1.200">
                    <circle cx="7" cy="7" r="6.300" />
                    <path d="M4.500 7l2 2 3-3.500" />
                </svg>
            </button>
        </footer>
    );
}

export default function App() {
    return (
        <div className="flex flex-col h-screen overflow-hidden bg-[#191919] font-['Inter',sans-serif] [font-variant-ligatures:none] text-xs text-[#c4c4c4] select-none">
            <TitleBar />
            <MainToolbar />
            <main className="grid flex-1 min-h-0 grid-cols-[868fr_259fr_337fr_444fr] gap-0.5">
                <div className="grid grid-cols-1 min-h-0 min-w-0 grid-rows-[484fr_459fr] gap-0.5">
                    <section className="flex flex-col min-h-0 min-w-0">
                        <Tab
                            title="Scene"
                            lock={false}
                            className="w-[73px] pl-1 gap-[5px]"
                            icon={
                                <svg viewBox="0 0 11 11" className="size-[11px] fill-none stroke-current">
                                    <path d="M3.500 0v11M7.500 0v11M0 3.500h11M0 7.500h11" />
                                </svg>
                            }
                        />
                        <SceneToolbar />
                        <SceneView />
                    </section>
                    <section className="flex flex-col min-h-0 min-w-0">
                        <Tab title="Game" lock={false} className="w-[71px] pl-[3px] gap-[3px]" icon={<FaGamepad className="size-3.5" />} />
                        <GameToolbar />
                        <div className="flex flex-1 min-h-0 justify-center pr-[3px] bg-[#282828]">
                            <div className="h-full aspect-[780/1280] pt-[65px] bg-[#234d39] text-center">
                                <p className="font-['Liberation_Sans',sans-serif] font-bold text-[23px] leading-7 text-white">0.00</p>
                            </div>
                        </div>
                    </section>
                </div>
                <Hierarchy />
                <Project />
                <Inspector />
            </main>
            <StatusBar />
        </div>
    );
}
